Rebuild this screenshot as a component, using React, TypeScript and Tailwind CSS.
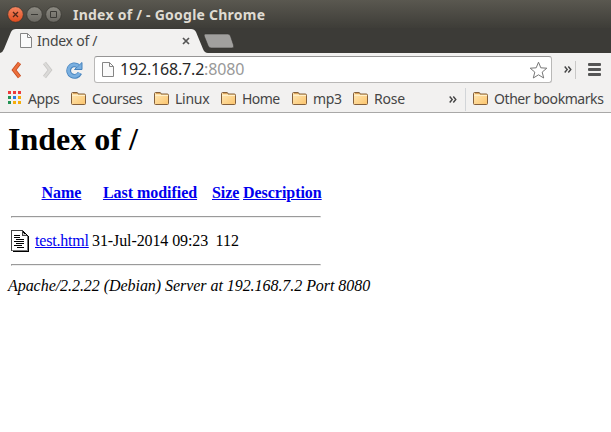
import React from "react";

function PageIcon({ className }: { className: string }) {
  return (
    <svg className={className} viewBox="0 0 12 15" fill="none">
      <path d="M.5.5h7l4 4v10H.5z" fill="#fafafa" stroke="#858585" />
      <path d="M7.5.5v4h4" stroke="#858585" />
    </svg>
  );
}

function Folder() {
  return (
    <svg className="-mt-[2px] h-[13px] w-[15px] shrink-0" viewBox="0 0 15 13">
      <defs>
        <linearGradient id="folder" x1="0" y1="0" x2="1" y2="1">
          <stop offset="0" stopColor="#ffe9b8" />
          <stop offset="1" stopColor="#fbc46c" />
        </linearGradient>
      </defs>
      <path
        d="M.5 11.5V1.7Q.5.5 1.7.5H6q1 0 1 1.5h6.3q1.2 0 1.2 1.2v8.3q0 1-1 1h-12q-1 0-1-1z"
        fill="url(#folder)"
        stroke="#84603c"
      />
      <path d="M1 3.5h13" stroke="#fff0cb" />
      <path d="M2 1.5h4" stroke="#dba45c" />
    </svg>
  );
}

function Bookmark({ label, width, text }: { label: string; width: string; text: string }) {
  return (
    <div className={`flex h-full shrink-0 items-center gap-[6px] ${width}`}>
      <Folder />
      <span className={`whitespace-nowrap ${text}`}>{label}</span>
    </div>
  );
}

function Chevrons() {
  return (
    <svg className="h-[7px] w-[8px] shrink-0" viewBox="0 0 8 7" fill="none" stroke="#444" strokeWidth="1.4">
      <path d="M.7.5l2.500 3-2.500 3M4.300.5l2.500 3-2.500 3" />
    </svg>
  );
}

function WindowButtons() {
  return (
    <svg className="h-[17px] w-[56px]" viewBox="0 0 56 17" fill="none">
      <defs>
        <linearGradient id="close" x1="0" y1="0" x2="0" y2="1">
          <stop offset="0" stopColor="#f58763" />
          <stop offset="1" stopColor="#df4b1d" />
        </linearGradient>
        <linearGradient id="grey" x1="0" y1="0" x2="0" y2="1">
          <stop offset="0" stopColor="#8d8b83" />
          <stop offset="1" stopColor="#6a6862" />
        </linearGradient>
      </defs>
      <circle cx="8.500" cy="8.500" r="7.800" fill="url(#close)" stroke="#34322d" strokeWidth=".7" />
      <circle cx="27.500" cy="8.500" r="7.800" fill="url(#grey)" stroke="#34322d" strokeWidth=".7" />
      <circle cx="46.500" cy="8.500" r="7.800" fill="url(#grey)" stroke="#34322d" strokeWidth=".7" />
      <path d="M6 6l5 5M11 6l-5 5" stroke="#50271a" strokeWidth="1.300" />
      <path d="M24 8.500h7M43.500 5.500h6v6h-6z" stroke="#3b3a36" />
    </svg>
  );
}

const appColors = [
  "bg-[#ec3b3b]", "bg-[#ec3b3b]", "bg-[#ec3b3b]",
  "bg-[#239354]", "bg-[#2a7de1]", "bg-[#f5ad0b]",
  "bg-[#239354]", "bg-[#f5ad0b]", "bg-[#f5ad0b]",
];

function Rule() {
  return (
    <tr>
      <th colSpan={5} className="p-0">
        <hr className="my-[9px] h-[2px] border border-t-[#9a9a9a] border-r-[#eee] border-b-[#eee] border-l-[#9a9a9a]" />
      </th>
    </tr>
  );
}

function FileIcon() {
  return (
    <svg className="block h-[22px] w-[19px]" viewBox="0 0 19 22" fill="none" shapeRendering="crispEdges">
      <path d="M.5.5h11l5 5v15H.5z" fill="white" stroke="#444" />
      <path d="M2 21.500h16M17.500 6v16" stroke="black" />
      <path d="M1 20.500h16M16.500 6v15" stroke="#777" />
      <path d="M11.500 1v4.500h5" fill="#ccc" stroke="#444" />
      <path d="M12 1.500l5 4.500" stroke="black" />
      <path d="M3 5.500h6M3 7.500h6M5 9.500h8M3 11.500h10M5 13.500h8M3 15.500h8M6 17.500h7" stroke="black" />
    </svg>
  );
}

export default function App() {
  return (
    <div className="h-[432px] w-[611px] overflow-hidden bg-white font-['Noto_Sans',sans-serif] text-[#454545]">
      <header className="flex h-7 items-center bg-linear-to-b from-[#5a5850] to-[#3e3d38] pl-[7px]">
        <WindowButtons />
        <h1 className="mt-[2px] ml-[10px] text-[14px] leading-[26px] font-bold tracking-[0.24px] whitespace-nowrap text-[#dfdbd2]">
          Index of / - Google Chrome
        </h1>
      </header>

      <div className="flex h-[25px] bg-[#3c3b37]">
        <div className="relative flex h-full w-[203px] shrink-0 items-center pl-5">
          <svg className="absolute top-0 left-0 h-[25px] w-[210px]" viewBox="0 0 210 25">
            <path d="M0 25Q3 24 4 21L11 4Q12.300 1 16 1H191Q194.500 1 196 4L203 21Q204.500 25 208 25z" fill="#f2f1f0" />
          </svg>
          <PageIcon className="relative h-[15px] w-[12px]" />
          <span className="relative ml-[5px] w-[145px] text-[14px] leading-[25px] tracking-[-0.25px] whitespace-nowrap">Index of /</span>
          <svg className="relative h-[8px] w-[8px]" viewBox="0 0 8 8" stroke="#555" strokeWidth="1.700">
            <path d="M1 1l6 6M7 1l-6 6" />
          </svg>
        </div>
        <svg className="mt-[5px] h-[16px] w-[32px]" viewBox="0 0 32 16">
          <path d="M2.500 1H25Q26.500 1 27.500 3L30.500 12Q31.500 15 29 15H8Q6 15 5 12.500L1.200 3Q.5 1 2.500 1z" fill="#a1a09e" stroke="#34332f" strokeWidth=".6" />
        </svg>
      </div>

      <div className="flex h-[33px] items-center bg-[#f2f1f0]">
        <svg className="ml-[11px] h-[18px] w-[11px]" viewBox="0 0 11 18" fill="none">
          <path d="M8.500 2L3 9L8.500 16" stroke="#c44c22" strokeWidth="4" />
          <path d="M8.500 2L3 9L8.500 16" stroke="#ed713d" strokeWidth="2.400" />
        </svg>
        <svg className="ml-[20px] h-[18px] w-[11px]" viewBox="0 0 11 18" fill="none">
          <path d="M2.500 2L8 9l-5.500 7" stroke="#c8c7c5" strokeWidth="3.800" />
          <path d="M2.500 2L8 9l-5.500 7" stroke="#dbdad8" strokeWidth="2.200" />
        </svg>
        <svg className="ml-[13px] h-[18px] w-[17px]" viewBox="0 0 17 18" fill="none">
          <path d="M12 5A5.800 5.800 0 1 0 13.800 12" stroke="#4783bd" strokeWidth="4.800" />
          <path d="M8.500 8.500h7.500v-7z" fill="#79afe0" stroke="#4783bd" />
          <path d="M12 5A5.800 5.800 0 1 0 13.500 12" stroke="#79afe0" strokeWidth="3" />
        </svg>
        <div className="ml-[11px] flex h-[27px] w-[458px] shrink-0 items-center rounded-[3px] border border-[#b9b8b7] border-t-[#969595] bg-white pl-[7px]">
          <PageIcon className="h-[15px] w-[12px]" />
          <span className="ml-[6px] w-[409px] text-[16px] leading-[25px] tracking-[-0.18px] whitespace-nowrap text-[#292929]">
            192.168.7.2<span className="text-[#999]">:8080</span>
          </span>
          <svg className="h-[18px] w-[19px]" viewBox="0 0 19 18" fill="none">
            <path d="M9.500 1.200l2.300 5.600 6 .4-4.600 3.900 1.500 5.900-5.200-3.200L4.300 17l1.500-5.900-4.600-3.900 6-.4z" stroke="#777" strokeLinejoin="round" />
          </svg>
        </div>
        <div className="ml-3 flex items-center">
          <Chevrons />
          <div className="ml-[3px] h-[18px] w-px bg-[#c9c8c7]" />
        </div>
        <div className="ml-3 flex flex-col gap-[2px]">
          <div className="h-[3px] w-[13px] rounded-[1px] bg-[#555]" />
          <div className="h-[3px] w-[13px] rounded-[1px] bg-[#555]" />
          <div className="h-[3px] w-[13px] rounded-[1px] bg-[#555]" />
        </div>
      </div>

      <nav className="flex h-[27px] items-center border-b border-[#a9a8a7] bg-[#f2f1f0] pl-2 text-[14px] leading-[24px]">
        <div className="mb-[3px] grid w-[13px] grid-cols-3 gap-[2px]">
          {appColors.map((color, i) => (
            <div key={i} className={`size-[3px] ${color}`} />
          ))}
        </div>
        <span className="ml-[7px] w-[43px] shrink-0 tracking-[-0.4px]">Apps</span>
        <Bookmark label="Courses" width="w-[83px]" text="tracking-[-0.4px]" />
        <Bookmark label="Linux" width="w-[67px]" text="tracking-[-0.25px]" />
        <Bookmark label="Home" width="w-[71px]" text="tracking-[-0.55px]" />
        <Bookmark label="mp3" width="w-[61px]" text="tracking-[-0.4px]" />
        <Bookmark label="Rose" width="w-[96px]" text="tracking-[-0.25px]" />
        <Chevrons />
        <div className="ml-2 h-[23px] w-px shrink-0 bg-[#d2d5d8]" />
        <div className="ml-[7px]">
          <Bookmark label="Other bookmarks" width="w-[136px]" text="tracking-[-0.43px]" />
        </div>
      </nav>

      <main className="px-2 pt-[8px] font-['Liberation_Serif',serif] text-[16px] leading-[18px] text-black">
        <h1 className="mb-[22px] text-[32px] leading-[37px] font-bold">Index of /</h1>
        <table className="-ml-px w-[318px] table-fixed border-separate border-spacing-x-[4px] border-spacing-y-[2px] whitespace-nowrap">
          <colgroup>
            <col className="w-[20px]" />
            <col className="w-[53px]" />
            <col className="w-[116px]" />
            <col className="w-[27px]" />
            <col className="w-[78px]" />
          </colgroup>
          <thead>
            <tr className="h-[23px] align-top tracking-[-0.04px] text-[#0000ee]">
              <th className="p-0" />
              <th className="p-0 pt-[2px] text-center"><a className="underline" href="#name">Name</a></th>
              <th className="p-0 pt-[2px] text-center"><a className="underline" href="#modified">Last modified</a></th>
              <th className="p-0 pt-[2px] text-left"><a className="underline" href="#size">Size</a></th>
              <th className="p-0 pt-[2px] text-left"><a className="underline" href="#description">Description</a></th>
            </tr>
          </thead>
          <tbody>
            <Rule />
            <tr>
              <td className="px-0 py-px"><FileIcon /></td>
              <td className="px-0 py-px tracking-[-0.2px]"><a className="text-[#0000ee] underline" href="#test">test.html</a></td>
              <td className="px-0 py-px tracking-[-0.1px]">31-Jul-2014 09:23</td>
              <td className="px-0 py-px text-right">112</td>
              <td className="p-0" />
            </tr>
            <Rule />
          </tbody>
        </table>
        <address className="tracking-[-0.05px] italic">Apache/2.2.22 (Debian) Server at 192.168.7.2 Port 8080</address>
      </main>
    </div>
  );
}
